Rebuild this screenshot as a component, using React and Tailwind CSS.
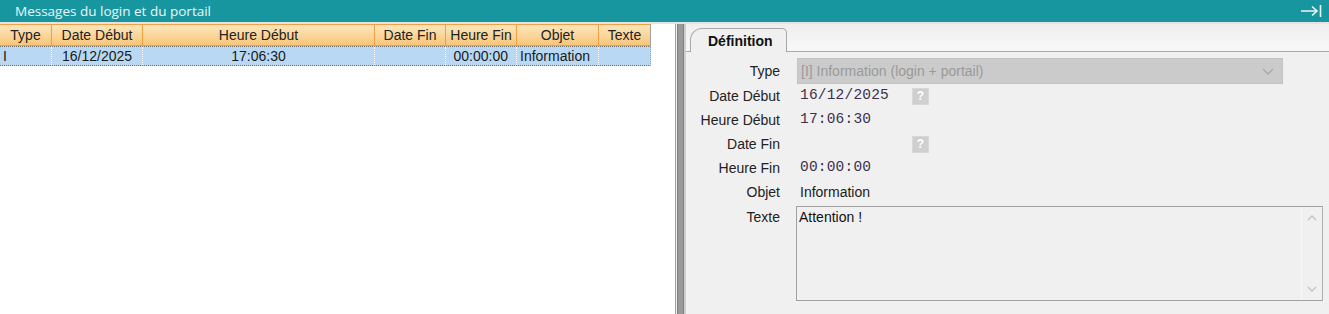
import React from 'react';

const cols = [
  { label: 'Type', w: 52 },
  { label: 'Date Début', w: 91 },
  { label: 'Heure Début', w: 232 },
  { label: 'Date Fin', w: 71 },
  { label: 'Heure Fin', w: 71 },
  { label: 'Objet', w: 82 },
  { label: 'Texte', w: 51 },
];

const row = [
  { v: 'I', align: 'text-left pl-[3px]' },
  { v: '16/12/2025', align: 'text-center' },
  { v: '17:06:30', align: 'text-center' },
  { v: '', align: 'text-center' },
  { v: '00:00:00', align: 'text-right pr-[8px]' },
  { v: 'Information', align: 'text-left pl-[3px]' },
  { v: '', align: 'text-left' },
];

function Help() {
  return (
    <span className="w-[17px] h-[17px] bg-[#cfcfcf] border border-[#d8d8d8] text-white text-[12px] font-bold leading-[15px] text-center">?</span>
  );
}

function Field({ label, children, h = 'h-6' }) {
  return (
    <div className={`flex items-center ${h}`}>
      <div className="w-[108px] text-right pr-[14px] text-[#222]">{label}</div>
      <div className="flex-1 flex items-center">{children}</div>
    </div>
  );
}

export default function App() {
  const mono = "font-['Liberation_Mono',monospace] text-[14.5px] text-[#3a3050] tracking-[0.2px]";
  return (
    <div className="w-[1329px] h-[314px] flex flex-col bg-[#f0f0f0] font-['Liberation_Sans',Arial,sans-serif] text-[14px] overflow-hidden">
      {/* barre de titre */}
      <div className="h-[22px] bg-[#1896a0] flex items-center justify-between pl-[15px] pr-[7px] shrink-0">
        <span className="font-['Open_Sans',sans-serif] text-[13.5px] text-[#eaf6f7]">Messages du login et du portail</span>
        <svg width="22" height="14" viewBox="0 0 22 14" fill="none" stroke="#e8f6f7" strokeWidth="1.6">
          <path d="M1 7h16M12 2.5l5 4.5-5 4.5M20.5 1v12" />
        </svg>
      </div>
      <div className="h-[2px] bg-[#e4e4e4] shrink-0" />

      <div className="flex flex-1 min-h-0">
        {/* grille */}
        <div className="w-[676px] bg-white border-r border-[#a0a0a0] shrink-0">
          <div className="flex h-[22px] border-b border-[#f0a040] bg-gradient-to-b from-[#fde6bc] to-[#f8c678] border-t border-[#9a9a9a] w-[651px] border-r border-r-[#a0a0a0]">
            {cols.map((c, i) => (
              <div key={i} style={{ width: c.w }} className="border-r border-[#f0a040] text-center leading-[20px] text-[#222] last:border-r-0">
                {c.label}
              </div>
            ))}
          </div>
          <div className="flex h-[20px] bg-[#b8d8f3] border-y border-dotted border-[#707070] w-[651px] border-r border-r-[#a0a0a0]">
            {row.map((c, i) => (
              <div key={i} style={{ width: cols[i].w }} className={`border-r border-dotted border-white leading-[18px] text-[#1a1a1a] ${c.align} last:border-r-0`}>
                {c.v}
              </div>
            ))}
          </div>
        </div>

        {/* séparateur */}
        <div className="w-[10px] flex shrink-0">
          <div className="w-[1px] bg-[#f0f0f0]" />
          <div className="w-[7px] bg-[#9a9a9a] border-x border-[#808080]" />
          <div className="w-[2px] bg-[#cfcfcf]" />
        </div>

        {/* fiche */}
        <div className="flex-1 flex flex-col">
          <div className="h-[28px] flex items-end bg-gradient-to-b from-[#efefef] to-[#f8f8f8] border-b border-[#a8a8a8] pl-[4px]">
            <div className="h-[24px] -mb-px px-[13px] pl-[17px] bg-[#f0f0f0] border border-b-0 border-[#a8a8a8] rounded-tl-[12px] rounded-tr-[5px] font-bold text-[#111] leading-[24px]">
              Définition
            </div>
          </div>
          <div className="pt-[6px] flex flex-col">
            <Field label="Type" h="h-[26px]">
              <div className="ml-[3px] w-[486px] h-[26px] bg-[#cbcbcb] border border-[#c2c2c2] flex items-center justify-between pl-[3px] pr-[8px] text-[#9a9a9a]">
                <span>[I] Information (login + portail)</span>
                <svg width="12" height="7" viewBox="0 0 12 7" fill="none" stroke="#a8a8a8" strokeWidth="1.3"><path d="M1 1l5 5 5-5" /></svg>
              </div>
            </Field>
            <Field label="Date Début">
              <span className={`${mono} ml-[6px] w-[112px]`}>16/12/2025</span>
              <Help />
            </Field>
            <Field label="Heure Début">
              <span className={`${mono} ml-[6px]`}>17:06:30</span>
            </Field>
            <Field label="Date Fin">
              <span className="ml-[6px] w-[112px]" />
              <Help />
            </Field>
            <Field label="Heure Fin">
              <span className={`${mono} ml-[6px]`}>00:00:00</span>
            </Field>
            <Field label="Objet">
              <span className="ml-[6px] text-[#1a1a1a]">Information</span>
            </Field>
            <div className="flex mt-[2px]">
              <div className="w-[108px] text-right pr-[14px] text-[#222] leading-[20px] pt-[1px]">Texte</div>
              <div className="ml-[2px] w-[527px] h-[95px] border border-[#a0a0a0] border-r-[#b0b0b0] flex">
                <div className="flex-1 pl-[2px] pt-[1px] text-[#111] leading-[18px]">Attention !</div>
                <div className="w-[21px] border-l border-[#f8f8f8] flex flex-col items-center justify-between py-[8px]">
                  <svg width="10" height="6" viewBox="0 0 10 6" fill="none" stroke="#c4c4c4" strokeWidth="1.3"><path d="M1 5l4-4 4 4" /></svg>
                  <svg width="10" height="6" viewBox="0 0 10 6" fill="none" stroke="#c4c4c4" strokeWidth="1.3"><path d="M1 1l4 4 4-4" /></svg>
                </div>
              </div>
            </div>
          </div>
        </div>
      </div>
    </div>
  );
}
